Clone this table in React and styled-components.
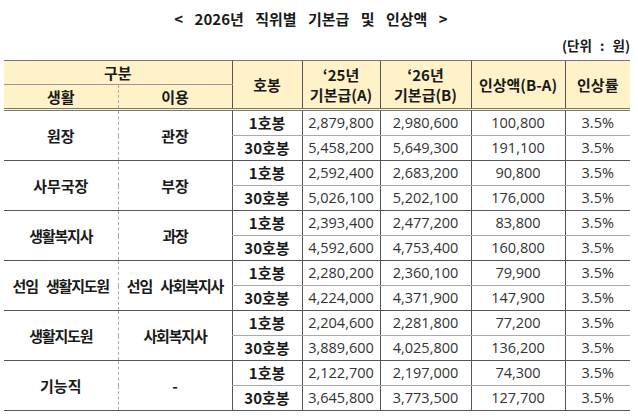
import React from 'react';
import styled, { createGlobalStyle } from 'styled-components';

const GlobalStyle = createGlobalStyle`
  html, body {
    margin: 0;
    padding: 0;
    background: #ffffff;
  }
  body {
    font-family: 'Noto Sans CJK KR', 'Noto Sans', sans-serif;
    color: #1a1a1a;
  }
`;

const rows = [
  { life: '원장', use: '관장', steps: [
    ['1호봉', '2,879,800', '2,980,600', '100,800', '3.5%'],
    ['30호봉', '5,458,200', '5,649,300', '191,100', '3.5%'],
  ] },
  { life: '사무국장', use: '부장', steps: [
    ['1호봉', '2,592,400', '2,683,200', '90,800', '3.5%'],
    ['30호봉', '5,026,100', '5,202,100', '176,000', '3.5%'],
  ] },
  { life: '생활복지사', use: '과장', tight: true, steps: [
    ['1호봉', '2,393,400', '2,477,200', '83,800', '3.5%'],
    ['30호봉', '4,592,600', '4,753,400', '160,800', '3.5%'],
  ] },
  { life: '선임 생활지도원', use: '선임 사회복지사', tight: true, steps: [
    ['1호봉', '2,280,200', '2,360,100', '79,900', '3.5%'],
    ['30호봉', '4,224,000', '4,371,900', '147,900', '3.5%'],
  ] },
  { life: '생활지도원', use: '사회복지사', tight: true, steps: [
    ['1호봉', '2,204,600', '2,281,800', '77,200', '3.5%'],
    ['30호봉', '3,889,600', '4,025,800', '136,200', '3.5%'],
  ] },
  { life: '기능직', use: '-', steps: [
    ['1호봉', '2,122,700', '2,197,000', '74,300', '3.5%'],
    ['30호봉', '3,645,800', '3,773,500', '127,700', '3.5%'],
  ] },
];

const Page = styled.div`
  width: 638px;
  height: 418px;
  padding: 8px 8px 0 4px;
  box-sizing: border-box;
  display: flex;
  flex-direction: column;
`;

const Title = styled.h1`
  margin: 0;
  height: 22px;
  text-align: center;
  font-size: 15px;
  font-weight: 700;
  line-height: 22px;
  word-spacing: 8px;
  padding-right: 12px;
`;

const Unit = styled.div`
  height: 30px;
  text-align: right;
  font-size: 13.5px;
  font-weight: 700;
  line-height: 30px;
  word-spacing: 5px;
`;

const Table = styled.table`
  width: 626px;
  border-collapse: collapse;
  table-layout: fixed;
`;

const Col = styled.col`
  width: ${p => p.$w}px;
`;

const Head = styled.th`
  height: 23px;
  padding: 0;
  background: #fff2c8;
  font-size: 15px;
  font-weight: 700;
  line-height: 20px;
  text-align: center;
  border-top: 1px solid #777;
  border-bottom: ${p => (p.$bottom ? '3px double #777' : '1px solid #999')};
  border-left: ${p => (p.$dashLeft ? '1px dashed #aaa' : p.$first ? 'none' : '1px solid #555')};
  color: #1a1a1a;
`;

const Cell = styled.td`
  height: 24px;
  padding: 0;
  text-align: center;
  font-size: ${p => (p.$num ? '14.5px' : '15px')};
  line-height: 20px;
  font-family: ${p => (p.$num ? "'Open Sans', 'Noto Sans', sans-serif" : "'Noto Sans CJK KR', sans-serif")};
  font-weight: ${p => (p.$bold ? 700 : 400)};
  letter-spacing: ${p => (p.$tight ? '-1.2px' : '0')};
  word-spacing: 6px;
  white-space: nowrap;
  color: ${p => (p.$num ? '#333' : '#1a1a1a')};
  border-top: 1px solid ${p => (p.$groupTop ? '#555' : '#aaa')};
  border-bottom: 1px solid ${p => (p.$groupBottom ? '#555' : '#aaa')};
  border-left: ${p => (p.$dashLeft ? '1px dashed #aaa' : p.$first ? 'none' : '1px solid #555')};
`;

const widths = [114, 114, 70, 78, 91, 94, 65];

export default function App() {
  return (
    <Page>
      <GlobalStyle />
      <Title>&lt; 2026년 직위별 기본급 및 인상액 &gt;</Title>
      <Unit>(단위 : 원)</Unit>
      <Table>
        <colgroup>
          {widths.map((w, i) => <Col key={i} $w={w} />)}
        </colgroup>
        <thead>
          <tr>
            <Head colSpan={2} $first>구분</Head>
            <Head rowSpan={2} $bottom>호봉</Head>
            <Head rowSpan={2} $bottom>‘25년<br />기본급(A)</Head>
            <Head rowSpan={2} $bottom>‘26년<br />기본급(B)</Head>
            <Head rowSpan={2} $bottom>인상액(B-A)</Head>
            <Head rowSpan={2} $bottom>인상률</Head>
          </tr>
          <tr>
            <Head $first $bottom>생활</Head>
            <Head $dashLeft $bottom>이용</Head>
          </tr>
        </thead>
        <tbody>
          {rows.map(group =>
            group.steps.map((s, i) => (
              <tr key={group.life + s[0]}>
                {i === 0 && (
                  <>
                    <Cell rowSpan={2} $first $bold $tight={group.tight} $groupTop $groupBottom>{group.life}</Cell>
                    <Cell rowSpan={2} $dashLeft $bold $tight={group.tight} $groupTop $groupBottom>{group.use}</Cell>
                  </>
                )}
                <Cell $bold $groupTop={i === 0} $groupBottom={i === 1}>{s[0]}</Cell>
                <Cell $num $groupTop={i === 0} $groupBottom={i === 1}>{s[1]}</Cell>
                <Cell $num $groupTop={i === 0} $groupBottom={i === 1}>{s[2]}</Cell>
                <Cell $num $groupTop={i === 0} $groupBottom={i === 1}>{s[3]}</Cell>
                <Cell $num $groupTop={i === 0} $groupBottom={i === 1}>{s[4]}</Cell>
              </tr>
            ))
          )}
        </tbody>
      </Table>
    </Page>
  );
}
